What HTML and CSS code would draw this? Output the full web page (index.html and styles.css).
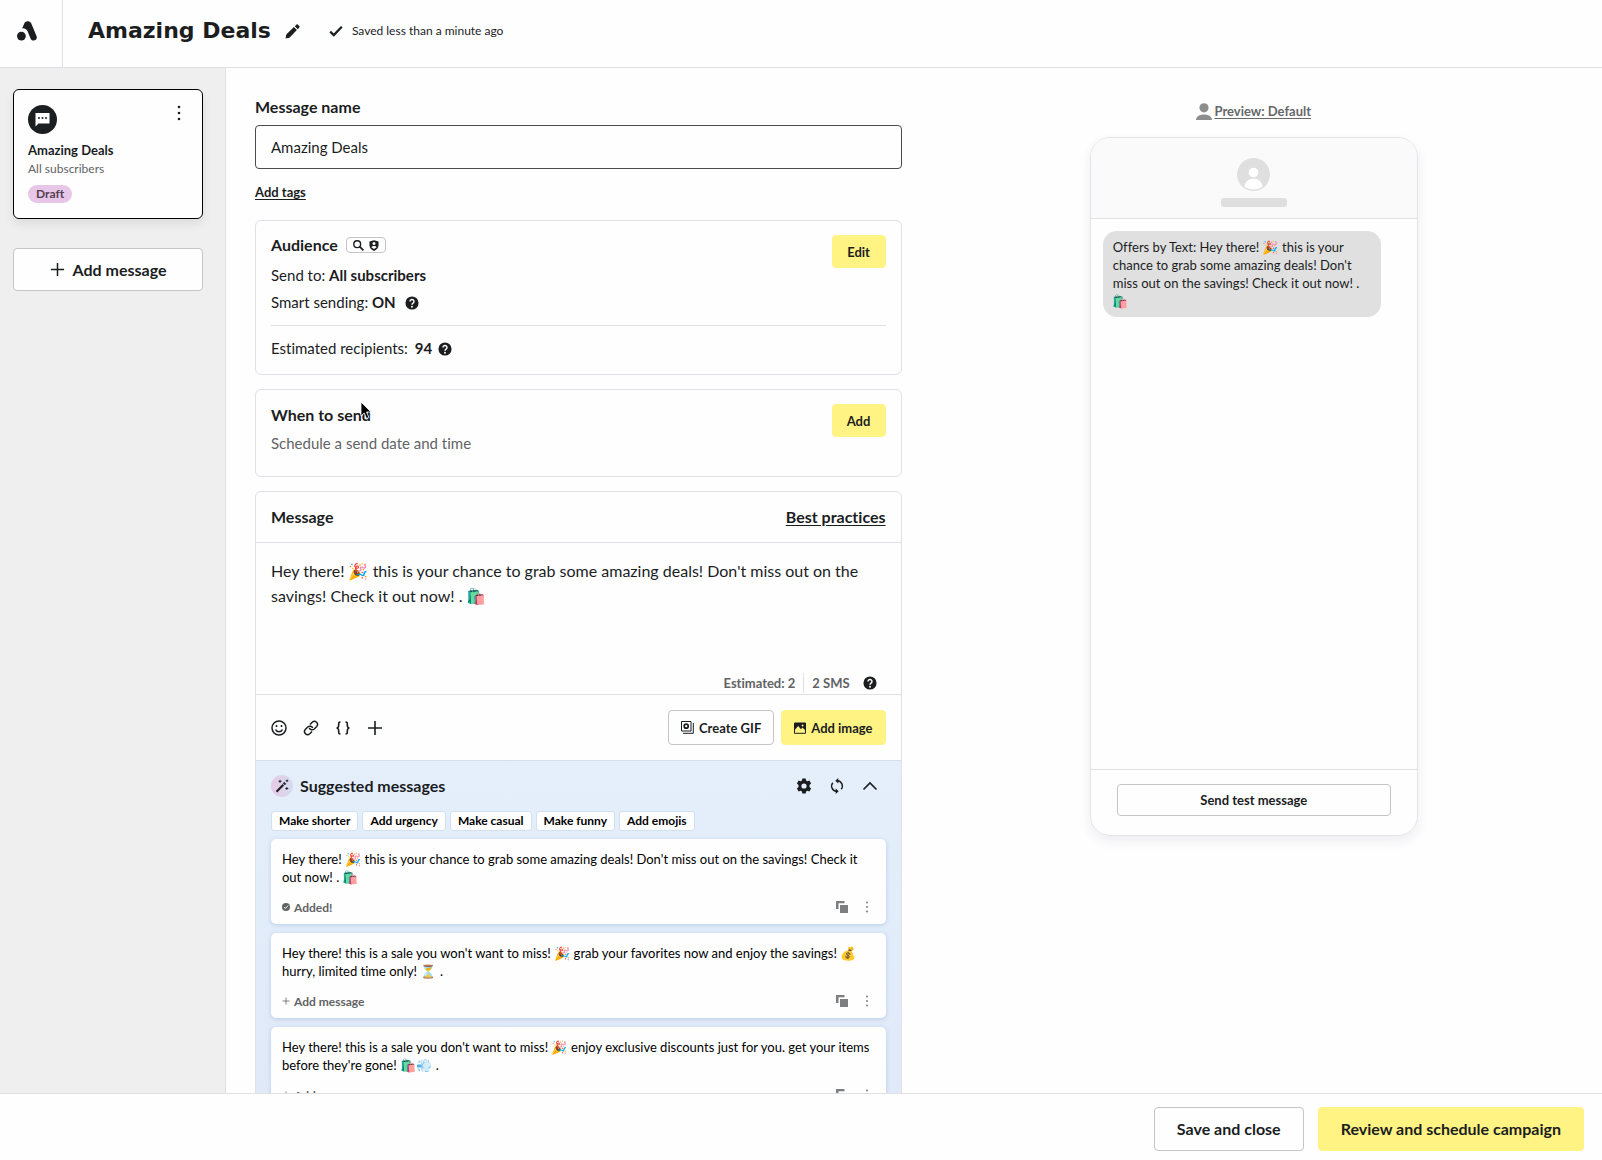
FILE: index.html
```html
<!DOCTYPE html>
<html lang="en">
<head>
<meta charset="utf-8">
<title>Amazing Deals</title>
<link rel="stylesheet" href="styles.css">
</head>
<body>
<svg class="sprite" aria-hidden="true">
  <symbol id="plus" viewBox="0 0 16 16"><path d="M8 1v14M1 8h14" fill="none" stroke="currentColor" stroke-width="1.6"/></symbol>
  <symbol id="dots" viewBox="0 0 16 16"><circle cx="8" cy="2" r="1.3"/><circle cx="8" cy="8" r="1.3"/><circle cx="8" cy="14" r="1.3"/></symbol>
  <symbol id="help" viewBox="0 0 16 16"><circle cx="8" cy="8" r="7.5"/><path d="M5.7 6.3a2.3 2.2 0 1 1 3.5 1.8C8.3 8.7 8 9 8 10" fill="none" stroke="#fff" stroke-width="1.7"/><circle cx="8" cy="12.2" r="1.1" fill="#fff"/></symbol>
  <symbol id="copy" viewBox="0 0 12 12"><path d="M0 0h8.500v2.200H2.500v5.800H0z"/><path d="M4 4h8v8H4z"/></symbol>
</svg>

<header class="topbar">
  <a class="logo" href="#" aria-label="Home">
    <svg width="20" height="20" viewBox="0 0 20 20"><path d="M9.600.600c2-.9 3.900.2 4.700 1.900l5.200 12.400c1.200 3-.9 4.700-2.900 4.700-1.700 0-2.500-.8-3.200-2.300L10.700 10.500c-.9-2-2.300-3.400-5.500-3.300L7.400 2.300C7.900 1.300 8.700.9 9.600.600z"/><circle cx="4.400" cy="15.100" r="4.400"/></svg>
  </a>
  <h1 class="title">Amazing Deals</h1>
  <button class="icon-btn" type="button" aria-label="Rename">
    <svg width="15" height="15" viewBox="0 0 15 15"><path d="M.5 14.500l.8-3.900 7.600-7.500 3 3-7.500 7.600zM9.800 2.200L11.400.7c.5-.5 1-.5 1.500 0l1.400 1.400c.5.5.5 1 0 1.500l-1.500 1.600z"/></svg>
  </button>
  <p class="saved">
    <svg width="14" height="12" viewBox="0 0 14 12"><path d="M1.200 6.600l3.600 3.500 8-8.400" fill="none" stroke="currentColor" stroke-width="2.200"/></svg>
    Saved less than a minute ago
  </p>
</header>

<div class="workspace">
  <aside class="sidebar">
    <article class="step">
      <div class="step-top">
        <span class="step-icon"><svg width="15" height="15" viewBox="0 0 15 15"><path d="M.5 1h14v10.500H3.500L.5 14.500z" fill="#fff"/><circle cx="4" cy="6" r="1" fill="#1b1f22"/><circle cx="7.500" cy="6" r="1" fill="#1b1f22"/><circle cx="11" cy="6" r="1" fill="#1b1f22"/></svg></span>
        <button class="icon-btn" type="button" aria-label="Message options"><svg width="16" height="16"><use href="#dots"/></svg></button>
      </div>
      <h2 class="step-name">Amazing Deals</h2>
      <p class="step-audience">All subscribers</p>
      <span class="pill">Draft</span>
    </article>
    <button class="btn btn-add" type="button"><svg width="15" height="15"><use href="#plus"/></svg>Add message</button>
  </aside>

  <main class="content">
    <form class="form">
      <label class="label" for="message-name">Message name</label>
      <input class="field" id="message-name" type="text" value="Amazing Deals">
      <a class="tags" href="#">Add tags</a>

      <section class="card audience">
        <div class="card-main">
          <div class="card-head">
            <h2 class="heading">Audience</h2>
            <span class="badges">
              <svg width="11" height="11" viewBox="0 0 11 11"><circle cx="4.200" cy="4.200" r="3.400" fill="none" stroke="currentColor" stroke-width="1.400"/><path d="M6.700 6.700l3.700 3.700" stroke="currentColor" stroke-width="1.700"/></svg>
              <svg width="10" height="11" viewBox="0 0 10 11"><path d="M.5 1.500L5 .3l4.500 1.200v4C9.500 8 7.500 10 5 11 2.500 10 .5 8 .5 5.500z"/><circle cx="5" cy="3.500" r="1.500" fill="#fff"/><path d="M2.300 7.200c.8-1.700 4.600-1.700 5.400 0L5 9z" fill="#fff"/></svg>
            </span>
          </div>
          <p class="row">Send to: <strong>All subscribers</strong></p>
          <p class="row">Smart sending: <strong>ON</strong> <svg class="help" width="14" height="14"><use href="#help"/></svg></p>
        </div>
        <button class="btn btn-yellow btn-side" type="button">Edit</button>
        <p class="row estimate">Estimated recipients: <strong>94</strong> <svg class="help" width="14" height="14"><use href="#help"/></svg></p>
      </section>

      <section class="card schedule">
        <div class="card-main">
          <h2 class="heading">When to send</h2>
          <p class="row muted">Schedule a send date and time</p>
        </div>
        <button class="btn btn-yellow btn-side" type="button">Add</button>
        <svg class="pointer" width="12" height="19" viewBox="0 0 12 19" aria-hidden="true"><path d="M1 1v14l3.200-3 2.300 5.500 2.400-1L6.600 11H11z" fill="#000" stroke="#fff" stroke-width=".8"/></svg>
      </section>

      <section class="card message">
        <header class="message-head">
          <h2 class="heading">Message</h2>
          <a class="practices" href="#">Best practices</a>
        </header>
        <textarea class="editor" aria-label="Message text">Hey there! 🎉 this is your chance to grab some amazing deals! Don't miss out on the savings! Check it out now! . 🛍️</textarea>
        <div class="counts"><span>Estimated: 2</span><span class="sms">2 SMS</span><svg width="14" height="14"><use href="#help"/></svg></div>
        <div class="toolbar">
          <button class="icon-btn" type="button" aria-label="Emoji"><svg class="outline" width="16" height="16" viewBox="0 0 16 16" stroke-width="1.500"><circle cx="8" cy="8" r="7"/><path d="M4.500 9.500c1.300 3 5.700 3 7 0"/><path d="M5.500 5v2M10.500 5v2"/></svg></button>
          <button class="icon-btn" type="button" aria-label="Link"><svg class="outline" width="16" height="16" viewBox="0 0 16 16" stroke-width="1.500"><path d="M7 4.500l2.200-2.300c3-2.600 7 1.200 4.500 4.300L11.300 9C9.300 10.600 7 9.800 6.300 8"/><path d="M9 11.500l-2.200 2.300c-3 2.600-7-1.200-4.500-4.300L4.700 7c2-1.600 4.300-.8 5 1"/></svg></button>
          <button class="icon-btn" type="button" aria-label="Variables"><svg class="outline" width="16" height="16" viewBox="0 0 16 16" stroke-width="1.600"><path d="M5.500 2C3.500 2 3.700 3 3.700 5S3.500 8 1.500 8c2 0 2.200 1 2.200 3s-.2 3 1.800 3M10.500 2c2 0 1.800 1 1.800 3s.2 3 2.200 3c-2 0-2.200 1-2.200 3s.2 3-1.800 3"/></svg></button>
          <button class="icon-btn" type="button" aria-label="More"><svg width="16" height="16"><use href="#plus"/></svg></button>
          <span class="spacer"></span>
          <button class="btn btn-line" type="button"><svg class="outline" width="13" height="13" viewBox="0 0 13 13"><path d="M.5.5h9.500v9.500H.5zM12.300 2v10.300H2"/><circle cx="5.200" cy="5.200" r="2" stroke-width="1.700"/></svg>Create GIF</button>
          <button class="btn btn-yellow" type="button"><svg width="12" height="12" viewBox="0 0 12 12"><path d="M.5 1h11v10.300H.5z" fill="none" stroke="currentColor"/><path d="M.5 1h11v7.500L8.500 5.500 7 7.300 4.200 4 .5 8.300z"/><circle cx="8.600" cy="3.500" r="1" fill="#fff383"/></svg>Add image</button>
        </div>

        <section class="suggest">
          <header class="suggest-head">
            <span class="wand"><svg width="14" height="14" viewBox="0 0 14 14"><path d="M.8 11.900L7.600 5l1.500 1.500-6.900 6.900z"/><path d="M8.300 4.300l.9-.9 1.500 1.500-.9.900zM5 .8v3M3.500 2.300h3M11.800 8v3M10.300 9.500h3M12 .5v2.600M10.700 1.800h2.600" stroke="currentColor" stroke-width=".9"/></svg></span>
            <h2 class="heading">Suggested messages</h2>
            <span class="spacer"></span>
            <button class="icon-btn" type="button" aria-label="Settings"><svg width="16" height="16" viewBox="0 0 16 16"><path fill-rule="evenodd" d="M6.300.5h3.400l.4 2.100 1.300.7 2-.7 1.700 2.900-1.600 1.400v2.200l1.600 1.400-1.700 2.900-2-.7-1.300.7-.4 2.100H6.300l-.4-2.100-1.300-.7-2 .7-1.700-2.900 1.600-1.400V6.900L.9 5.500l1.700-2.900 2 .7 1.300-.7zM8 5.400a2.600 2.600 0 1 0 0 5.200 2.600 2.600 0 0 0 0-5.200z"/></svg></button>
            <button class="icon-btn" type="button" aria-label="Refresh"><svg width="16" height="16" viewBox="0 0 16 16"><path d="M8.500 2.700a5.300 5.300 0 0 1 3.700 8.600M7.500 13.300a5.300 5.300 0 0 1-3.700-8.600" fill="none" stroke="currentColor" stroke-width="1.400"/><path d="M9.300 0v5.400L6.300 2.700zM6.700 10.600V16l3-2.700z"/></svg></button>
            <button class="icon-btn" type="button" aria-label="Collapse"><svg width="16" height="16" viewBox="0 0 16 16"><path d="M1.500 11.500L8 5l6.500 6.500" fill="none" stroke="currentColor" stroke-width="1.600"/></svg></button>
          </header>
          <div class="chips">
            <button class="chip" type="button">Make shorter</button>
            <button class="chip" type="button">Add urgency</button>
            <button class="chip" type="button">Make casual</button>
            <button class="chip" type="button">Make funny</button>
            <button class="chip" type="button">Add emojis</button>
          </div>
          <article class="idea">
            <p class="idea-text">Hey there! 🎉 this is your chance to grab some amazing deals! Don't miss out on the savings! Check it out now! . 🛍️</p>
            <div class="idea-actions">
              <button class="idea-add" type="button"><svg width="8" height="8" viewBox="0 0 8 8"><circle cx="4" cy="4" r="4"/><path d="M2 4.200l1.400 1.300 2.700-2.900" fill="none" stroke="#fff"/></svg>Added!</button>
              <span class="spacer"></span>
              <button class="icon-btn" type="button" aria-label="Copy"><svg width="12" height="12"><use href="#copy"/></svg></button>
              <button class="icon-btn" type="button" aria-label="Options"><svg width="12" height="12"><use href="#dots"/></svg></button>
            </div>
          </article>
          <article class="idea">
            <p class="idea-text">Hey there! this is a sale you won't want to miss! 🎉 grab your favorites now and enjoy the savings! 💰 hurry, limited time only! ⏳ .</p>
            <div class="idea-actions">
              <button class="idea-add" type="button"><svg width="8" height="8"><use href="#plus"/></svg>Add message</button>
              <span class="spacer"></span>
              <button class="icon-btn" type="button" aria-label="Copy"><svg width="12" height="12"><use href="#copy"/></svg></button>
              <button class="icon-btn" type="button" aria-label="Options"><svg width="12" height="12"><use href="#dots"/></svg></button>
            </div>
          </article>
          <article class="idea">
            <p class="idea-text">Hey there! this is a sale you don't want to miss! 🎉 enjoy exclusive discounts just for you. get your items before they're gone! 🛍️💨 .</p>
            <div class="idea-actions">
              <button class="idea-add" type="button"><svg width="8" height="8"><use href="#plus"/></svg>Add message</button>
              <span class="spacer"></span>
              <button class="icon-btn" type="button" aria-label="Copy"><svg width="12" height="12"><use href="#copy"/></svg></button>
              <button class="icon-btn" type="button" aria-label="Options"><svg width="12" height="12"><use href="#dots"/></svg></button>
            </div>
          </article>
        </section>
      </section>
    </form>

    <section class="preview" aria-label="Preview">
      <a class="preview-link" href="#"><svg width="16" height="17" viewBox="0 0 16 17"><circle cx="8" cy="4.800" r="4.600"/><path d="M0 17c0-3.500 3.500-5.600 8-5.600s8 2.100 8 5.600z"/></svg><span>Preview: Default</span></a>
      <div class="phone">
        <div class="phone-head">
          <svg width="33" height="33" viewBox="0 0 33 33"><circle cx="16.500" cy="16.500" r="16.500" fill="#dfdfdf"/><circle cx="16.500" cy="14.500" r="4.800" fill="#fff"/><path d="M7.500 28.500c.8-10.500 17.200-10.500 18 0-4.500 4-13.500 4-18 0z" fill="#fff"/></svg>
          <span class="phone-name"></span>
        </div>
        <div class="phone-body">
          <p class="bubble">Offers by Text: Hey there! 🎉 this is your chance to grab some amazing deals! Don't miss out on the savings! Check it out now! . 🛍️</p>
        </div>
        <div class="phone-foot"><button class="btn btn-line btn-test" type="button">Send test message</button></div>
      </div>
    </section>
  </main>
</div>

<footer class="bottombar">
  <button class="btn btn-line btn-large" type="button">Save and close</button>
  <button class="btn btn-yellow btn-large" type="button">Review and schedule campaign</button>
</footer>
</body>
</html>
```
FILE: styles.css
```css
* { box-sizing: border-box; }

body {
  display: flex;
  flex-direction: column;
  height: 100vh;
  margin: 0;
  overflow: hidden;
  background: #fefefe;
  color: #1b1d1f;
  font: 15px/20px Lato, "Noto Color Emoji", sans-serif;
  font-variant-ligatures: none;
}

h1, h2, p { margin: 0; }
a { color: inherit; text-underline-offset: 2px; }
svg { flex: none; fill: currentColor; }
button { color: inherit; font-family: inherit; cursor: pointer; }
.outline { fill: none; stroke: currentColor; }
.sprite { position: absolute; width: 0; height: 0; }
.spacer { flex: 1; }

.icon-btn {
  display: flex;
  padding: 0;
  border: 0;
  background: none;
}

.btn {
  display: flex;
  align-items: center;
  justify-content: center;
  gap: 5px;
  padding: 0 12px;
  border: 1px solid #c4c5c9;
  border-radius: 4px;
  background: #fefefe;
  font-weight: 700;
  font-size: 13px;
  line-height: 20px;
}
.btn-yellow { border-color: #fff383; background: #fff383; }

/* Top bar */
.topbar {
  display: flex;
  align-items: center;
  flex: none;
  height: 68px;
  padding-bottom: 5px;
  border-bottom: 1px solid #dfe0e4;
}
.logo {
  display: flex;
  align-items: center;
  justify-content: center;
  align-self: stretch;
  width: 63px;
  margin-bottom: -5px;
  padding: 0 9px 5px 0;
  border-right: 1px solid #dfe0e4;
}
.title {
  margin: 0 14px 0 25px;
  font: 700 22px/32px "DejaVu Sans", sans-serif;
}
.saved {
  display: flex;
  align-items: center;
  gap: 9px;
  margin-left: 29px;
  font-size: 12px;
}

/* Columns */
.workspace {
  display: flex;
  flex: 1;
  min-height: 0;
}
.sidebar {
  flex: none;
  width: 226px;
  padding: 21px 22px 21px 13px;
  border-right: 1px solid #e0e1e5;
  background: #f0eff0;
}
.content {
  display: flex;
  flex: 1;
  align-items: flex-start;
  min-width: 0;
  padding-left: 29px;
  overflow-y: auto;
  scrollbar-width: none;
}

/* Sidebar */
.step {
  padding: 15px 14px;
  border: 1px solid #000;
  border-radius: 6px;
  background: #fefefe;
  box-shadow: 0 5px 10px rgba(0, 0, 0, .08);
}
.step-top {
  display: flex;
  align-items: flex-start;
  justify-content: space-between;
}
.step-top .icon-btn { margin-right: 1px; }
.step-icon {
  display: flex;
  align-items: center;
  justify-content: center;
  width: 29px;
  height: 29px;
  border-radius: 50%;
  background: #1b1f22;
}
.step-name { margin-top: 6px; font-size: 13px; line-height: 20px; }
.step-audience { color: #626365; font-size: 12px; line-height: 18px; }
.pill {
  display: block;
  width: fit-content;
  margin-top: 7px;
  padding: 0 8px;
  border-radius: 9px;
  background: #e8c6e8;
  color: #54404f;
  font-weight: 700;
  font-size: 12px;
  line-height: 18px;
}
.btn-add {
  gap: 8px;
  width: 100%;
  height: 43px;
  margin-top: 29px;
  font-size: 15px;
}

/* Form */
.form {
  flex: 0 0 48%;
  padding: 29px 0 15px;
}
.label { display: block; font-weight: 700; font-size: 15px; }
.field {
  display: block;
  width: 100%;
  height: 44px;
  margin: 8px 0 12px;
  padding: 0 15px;
  border: 1px solid #4a4b4d;
  border-radius: 4px;
  background: #fefefe;
  color: inherit;
  font: inherit;
}
.tags { font-weight: 700; font-size: 13px; }

.card {
  margin-bottom: 14px;
  border: 1px solid #e0e1e6;
  border-radius: 6px;
}
.heading { font-size: 15px; line-height: 20px; }
.audience, .schedule {
  position: relative;
  display: flex;
  flex-wrap: wrap;
  align-items: flex-start;
  padding: 14px 15px;
}
.audience { margin-top: 18px; padding-bottom: 16px; }
.schedule { padding-bottom: 23px; }
.card-main {
  display: flex;
  flex: 1;
  flex-direction: column;
  gap: 7px;
}
.schedule .card-main { gap: 8px; padding-top: 1px; }
.card-head { display: flex; align-items: center; gap: 8px; margin-bottom: 3px; }
.badges {
  display: flex;
  align-items: center;
  gap: 5px;
  height: 16px;
  padding: 0 6px;
  border: 1px solid #c4c5c9;
  border-radius: 4px;
}
.row { line-height: 20px; }
.help { margin-left: 5px; vertical-align: -2px; }
.muted { color: #626365; }
.btn-side { width: 54px; height: 33px; }
.estimate {
  flex: 0 0 100%;
  margin-top: 13px;
  padding-top: 12px;
  border-top: 1px solid #dfe0e5;
}
.estimate strong { margin-left: 3px; }
.estimate .help { margin-left: 2px; }
.pointer { position: absolute; top: 11px; left: 104px; }

/* Message editor */
.message-head {
  display: flex;
  align-items: center;
  justify-content: space-between;
  height: 51px;
  padding: 0 15px;
  border-bottom: 1px solid #e0e1e6;
}
.practices { font-weight: 700; }
.editor {
  display: block;
  width: 100%;
  height: 131px;
  padding: 15px;
  border: 0;
  background: none;
  color: inherit;
  font-family: inherit;
  font-size: 16px;
  line-height: 25px;
  resize: none;
}
.counts {
  display: flex;
  align-items: center;
  justify-content: flex-end;
  height: 21px;
  padding: 0 24px 2px 0;
  border-bottom: 1px solid #dfe0e4;
  color: #626365;
  font-weight: 700;
  font-size: 13px;
}
.sms { margin-left: 8px; padding-left: 8px; border-left: 1px solid #dfe0e4; }
.counts svg { margin-left: 13px; color: #1b1d1f; }
.toolbar {
  display: flex;
  align-items: center;
  gap: 16px;
  padding: 15px;
}
.toolbar .btn { height: 35px; }
.toolbar .btn-yellow { margin-left: -9px; }

/* Suggestions */
.suggest {
  padding: 14px 15px 15px;
  border-top: 1px solid #d3dfee;
  background: linear-gradient(#e4effb, #dfe9f8);
}
.suggest-head { display: flex; align-items: center; gap: 7px; padding-right: 8px; }
.suggest-head .icon-btn { margin-left: 10px; }
.wand {
  display: flex;
  align-items: center;
  justify-content: center;
  width: 22px;
  height: 22px;
  border-radius: 50%;
  background: linear-gradient(90deg, #e8c9e6, #d5dcee);
}
.chips { display: flex; gap: 4px; margin: 14px 0 8px; }
.chip {
  height: 20px;
  padding: 0 7px;
  border: 1px solid #d2e1f0;
  border-radius: 3px;
  background: #fefefe;
  color: #000;
  font-weight: 700;
  font-size: 12px;
  line-height: 18px;
}
.idea {
  margin-bottom: 9px;
  padding: 11px 11px 8px;
  border-radius: 5px;
  background: #fefefe;
  box-shadow: 0 1px 4px rgba(90, 130, 190, .3);
}
.idea-text { color: #000; font-size: 13px; line-height: 18px; }
.idea-actions {
  display: flex;
  align-items: center;
  gap: 13px;
  height: 18px;
  margin-top: 12px;
  color: #7d7e80;
}
.idea-add {
  display: flex;
  align-items: center;
  gap: 4px;
  padding: 0;
  border: 0;
  background: none;
  color: #626365;
  font-weight: 700;
  font-size: 12px;
}
.idea-actions .icon-btn:last-child { margin-right: 2px; }

/* Phone preview */
.preview {
  display: flex;
  flex: 1;
  flex-direction: column;
  align-items: center;
  padding: 33px 0 30px 4px;
}
.preview-link {
  display: flex;
  align-items: center;
  gap: 2px;
  margin-bottom: 16px;
  color: #66676a;
  font-weight: 700;
  font-size: 13px;
  text-decoration: none;
}
.preview-link span { text-decoration: underline; }
.preview-link svg { color: #8d8d8d; }
.phone {
  width: 328px;
  max-width: 100%;
  overflow: hidden;
  border: 1px solid #e4e4e8;
  border-radius: 20px;
  box-shadow: 0 5px 12px rgba(40, 40, 90, .08);
}
.phone-head {
  display: flex;
  flex-direction: column;
  align-items: center;
  gap: 7px;
  padding: 20px 0 11px;
  border-bottom: 1px solid #e2e2e4;
  background: #fafafb;
}
.phone-name { width: 66px; height: 9px; border-radius: 3px; background: #dfdfdf; }
.phone-body { min-height: 550px; padding: 12px; }
.bubble {
  width: 278px;
  padding: 7px 10px;
  border-radius: 14px;
  background: #e0e0e0;
  font-size: 13px;
  line-height: 18px;
}
.phone-foot { padding: 14px 26px 19px; border-top: 1px solid #dfe0e4; }
.btn-test { width: 100%; height: 32px; }

/* Bottom bar */
.bottombar {
  display: flex;
  flex: none;
  align-items: center;
  justify-content: flex-end;
  gap: 14px;
  height: 67px;
  padding: 4px 18px 0 0;
  border-top: 1px solid #dfe0e4;
}
.btn-large { height: 44px; padding: 0 22px; font-size: 15px; }

/* Larger labels */
.label, .heading, .practices, .btn-add, .btn-large { font-size: 16px; }
```
